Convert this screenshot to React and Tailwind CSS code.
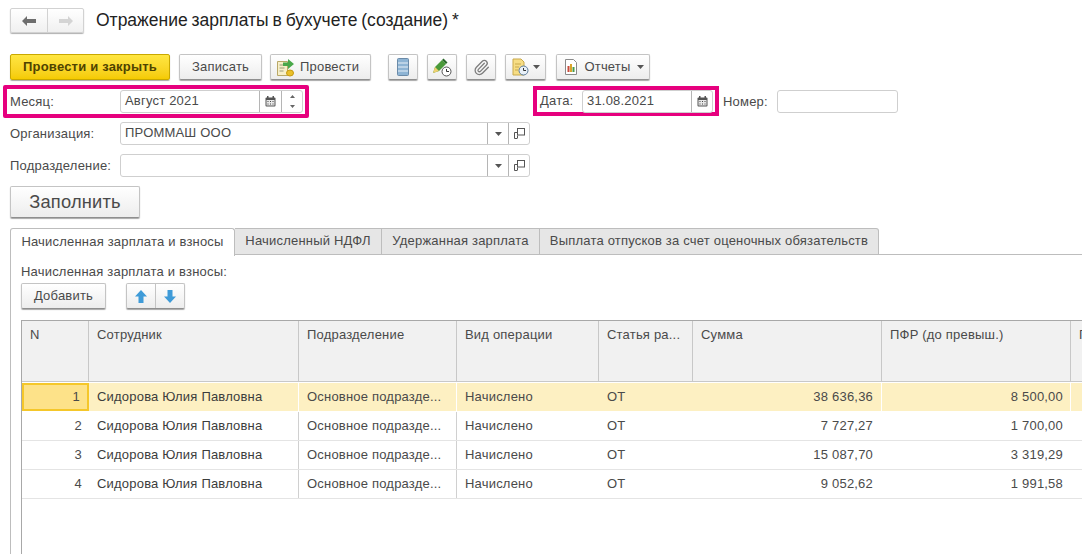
import React from "react";
import { Paperclip } from "lucide-react";

const Cal = () => (
  <svg width="11" height="11" viewBox="0 0 11 11" className="block">
    <rect x="0.5" y="1.5" width="10" height="9" rx="1" fill="#555" />
    <rect x="2" y="0" width="1.5" height="3" fill="#555" />
    <rect x="7.5" y="0" width="1.5" height="3" fill="#555" />
    <rect x="1.5" y="4" width="8" height="5.5" fill="#e8e8e8" />
    <path d="M2.5 5h1v1h-1zM5 5h1v1H5zM7.5 5h1v1h-1zM2.5 7.5h1v1h-1zM5 7.5h1v1H5zM7.5 7.5h1v1h-1z" fill="#444" />
  </svg>
);
const Tri = ({ color = "#555" }) => (
  <svg width="7" height="4" viewBox="0 0 7 4" className="block"><path d="M0 0h7L3.5 4z" fill={color} /></svg>
);
const OpenIcon = () => (
  <svg width="11" height="11" viewBox="0 0 11 11" className="block" fill="none" stroke="#555" strokeWidth="1">
    <rect x="3.5" y="0.5" width="7" height="6.5" />
    <path d="M3.500 4.500H0.500V10.500H3.500M3.500 7.500V10" />
  </svg>
);

const Btn = ({ w, h = "h-[26px]", className = "", children }) => (
  <div className={`${w} ${h} flex items-center justify-center shrink-0 rounded-[2px] border border-[#c4c4c4] border-b-[#8f8f8f] bg-gradient-to-b from-white to-[#ededed] shadow-[0_1px_1px_#a8a8a8] text-[#4a4a4a] ${className}`}>
    {children}
  </div>
);

const Field = ({ value, w, children }) => (
  <div className={`${w} h-[23px] shrink-0 flex items-stretch rounded-[3px] border border-[#cfcfcf] bg-white text-[#4a4a4a]`}>
    <div className="flex-1 pl-[4px] leading-[20px]">{value}</div>
    {children}
  </div>
);
const Cell = ({ w, children }) => (
  <div className={`${w} shrink-0 flex flex-col items-center justify-center border-l border-[#b5b5b5]`}>{children}</div>
);

const cols = "grid grid-cols-[67px_210px_158px_142px_94px_189px_189px_40px]";
const heads = ["N", "Сотрудник", "Подразделение", "Вид операции", "Статья ра...", "Сумма", "ПФР (до превыш.)", "П"];
const rows = [
  ["1", "38 636,36", "8 500,00"],
  ["2", "7 727,27", "1 700,00"],
  ["3", "15 087,70", "3 319,29"],
  ["4", "9 052,62", "1 991,58"],
];
const tabs = [
  ["w-[147px]", "Начисленный НДФЛ"],
  ["w-[158px]", "Удержанная зарплата"],
  ["w-[339px]", "Выплата отпусков за счет оценочных обязательств"],
];

export default function App() {
  return (
    <div className="w-[1082px] h-[554px] overflow-hidden bg-white text-[#4a4a4a] text-[13px] tracking-[0.2px] font-['Liberation_Sans',Arial,sans-serif] flex flex-col">
      {/* title bar */}
      <div className="flex items-center h-[25px] mt-[8px] ml-[10px]">
        <div className="flex w-[74px] h-[25px] rounded-[2px] border border-[#d2d2d2] bg-gradient-to-b from-white to-[#f0f0f0] shadow-[0_1px_1px_#b0b0b0]">
          <div className="w-[37px] flex items-center justify-center border-r border-[#d2d2d2]">
            <svg width="14" height="10" viewBox="0 0 14 10"><path d="M0 5l5-5v3h9v4H5v3z" fill="#6e6e6e" /></svg>
          </div>
          <div className="flex-1 flex items-center justify-center">
            <svg width="14" height="10" viewBox="0 0 14 10"><path d="M14 5L9 0v3H0v4h9v3z" fill="#d4d4d4" /></svg>
          </div>
        </div>
        <div className="ml-[12px] text-[17.5px] tracking-normal text-[#222] leading-[24px] -mt-[2px] w-[400px] whitespace-nowrap [word-spacing:-1px]">Отражение зарплаты в бухучете (создание) *</div>
      </div>

      {/* toolbar */}
      <div className="flex mt-[21px] ml-[10px] h-[26px]">
        <div className="w-[160px] h-[26px] flex items-center justify-center rounded-[2px] border border-[#c9a800] bg-gradient-to-b from-[#ffe640] to-[#f5cb00] shadow-[0_1px_1px_#a8a8a8] font-bold text-[#4f4300]">Провести и закрыть</div>
        <Btn w="w-[83px]" className="ml-[9px]">Записать</Btn>
        <Btn w="w-[101px]" className="ml-[8px] gap-[5px] !justify-start pl-[5px]">
          <svg width="19" height="19" viewBox="0 0 19 19">
            <path d="M1.500 3.500h10v14h-10z" fill="#f7efc8" stroke="#b9a868" />
            <path d="M3.500 7h6M3.500 10h5M3.500 13h4" stroke="#9a9a7a" />
            <path d="M7 4.500h5V1l6 5-6 5V8H7z" fill="#4aa84a" />
            <ellipse cx="14" cy="15" rx="3.500" ry="3" fill="#eac02a" stroke="#c69a10" />
          </svg>
          <span>Провести</span>
        </Btn>
        <Btn w="w-[30px]" className="ml-[17px]">
          <svg width="12" height="18" viewBox="0 0 12 18">
            <rect x="0.5" y="0.5" width="11" height="17" rx="1" fill="#8eb4d4" stroke="#6a8aa8" />
            <path d="M1 5h10M1 9h10M1 13h10" stroke="#e8f0f8" />
          </svg>
        </Btn>
        <Btn w="w-[30px]" className="ml-[9px]">
          <svg width="20" height="19" viewBox="0 0 20 19">
            <path d="M1 15l2-6 7-7 4 4-7 7z" fill="#4a9a3a" />
            <path d="M1 15l2-6 4 4z" fill="#f0d070" />
            <path d="M10 2l1.500-1.500 4 4L14 6z" fill="#2a6a2a" />
            <circle cx="14.500" cy="13.500" r="4.500" fill="#fff" stroke="#555" />
            <path d="M14.500 11v2.500H17" stroke="#333" fill="none" />
          </svg>
        </Btn>
        <Btn w="w-[30px]" className="ml-[9px]">
          <Paperclip size={17} color="#7d7d7d" strokeWidth={1.8} />
        </Btn>
        <Btn w="w-[41px]" className="ml-[9px] gap-[4px]">
          <svg width="18" height="18" viewBox="0 0 18 18">
            <path d="M2 1h8l3 3v13H2z" fill="#f6dd85" stroke="#c9a94a" />
            <path d="M4 6h6M4 9h4M4 12h3" stroke="#c9a94a" />
            <circle cx="12.500" cy="12.500" r="4.500" fill="#e8f0f8" stroke="#5a7a9a" />
            <path d="M12.500 10v2.500H15" stroke="#333" fill="none" />
          </svg>
          <Tri />
        </Btn>
        <Btn w="w-[94px]" className="ml-[10px] gap-[6px] pl-[2px]">
          <svg width="14" height="16" viewBox="0 0 14 16">
            <path d="M1.500 0.500h8l3 3v12h-11z" fill="#fff" stroke="#8a8a8a" />
            <rect x="3.500" y="7" width="2" height="6" fill="#c84a3a" />
            <rect x="6" y="5" width="2" height="8" fill="#d9a52a" />
            <rect x="8.500" y="8" width="2" height="5" fill="#4a9a4a" />
          </svg>
          <span>Отчеты</span>
          <Tri />
        </Btn>
      </div>

      {/* month / date row */}
      <div className="flex items-start mt-[5px] ml-[3px] h-[33px]">
        <div className="w-[306px] h-[33px] flex items-center rounded-[2px] border-[4px] border-[#e6007e] pl-[3px]">
          <div className="w-[110px]">Месяц:</div>
          <Field value="Август 2021" w="w-[183px]">
            <Cell w="w-[22px]"><Cal /></Cell>
            <Cell w="w-[21px]">
              <svg width="5" height="17" viewBox="0 0 5 17"><path d="M2.500 2L5 5H0zM0 12h5l-2.500 3z" fill="#666" /></svg>
            </Cell>
          </Field>
        </div>
        <div className="ml-[224px] mt-[1px] w-[186px] h-[30px] flex items-center border-[4px] border-[#e6007e] pl-[3px]">
          <div className="w-[42px]">Дата:</div>
          <Field value="31.08.2021" w="w-[131px]">
            <Cell w="w-[21px]"><Cal /></Cell>
          </Field>
        </div>
        <div className="ml-[4px] mt-[5px] h-[23px] leading-[23px]">Номер:</div>
        <div className="ml-[9px] mt-[5px] w-[121px] h-[23px] rounded-[3px] border border-[#cfcfcf]" />
      </div>

      {/* organisation */}
      <div className="flex items-center mt-[4px] ml-[10px]">
        <div className="w-[110px]">Организация:</div>
        <Field value="ПРОММАШ ООО" w="w-[410px]">
          <Cell w="w-[21px]"><Tri /></Cell>
          <Cell w="w-[21px]"><OpenIcon /></Cell>
        </Field>
      </div>
      <div className="flex items-center mt-[9px] ml-[10px]">
        <div className="w-[110px]">Подразделение:</div>
        <Field value="" w="w-[410px]">
          <Cell w="w-[21px]"><Tri /></Cell>
          <Cell w="w-[21px]"><OpenIcon /></Cell>
        </Field>
      </div>

      <Btn w="w-[130px]" h="h-[32px]" className="ml-[10px] mt-[9px] text-[18.3px]">Заполнить</Btn>

      {/* tabs */}
      <div className="flex mt-[10px] ml-[10px] h-[27px]">
        <div className="w-[225px] h-[28px] z-10 pb-[1px] flex items-center justify-center rounded-t-[3px] border border-[#bdbdbd] border-b-0 bg-white whitespace-nowrap">Начисленная зарплата и взносы</div>
        {tabs.map(([w, t], i) => (
          <div key={t} className={`${w} pb-[1px] flex items-center justify-center whitespace-nowrap bg-[#e6e6e6] border border-l-0 border-[#bdbdbd] ${i === 2 ? "rounded-tr-[3px]" : ""}`}>{t}</div>
        ))}
        <div className="flex-1 border-b border-[#bdbdbd]" />
      </div>

      {/* tab panel */}
      <div className="flex-1 min-h-0 ml-[10px] pl-[10px] border-l border-[#bdbdbd] flex flex-col">
        <div className="mt-[9px] leading-[16px]">Начисленная зарплата и взносы:</div>
        <div className="flex mt-[3px]">
          <Btn w="w-[85px]">Добавить</Btn>
          <div className="ml-[20px] flex w-[59px] h-[26px] rounded-[2px] border border-[#c4c4c4] border-b-[#8f8f8f] bg-gradient-to-b from-white to-[#ededed] shadow-[0_1px_1px_#a8a8a8]">
            <div className="flex-1 flex items-center justify-center border-r border-[#c4c4c4]">
              <svg width="12" height="13" viewBox="0 0 12 13"><path d="M6 0l6 6.500H8.500V13h-5V6.500H0z" fill="#3f9bd8" /></svg>
            </div>
            <div className="flex-1 flex items-center justify-center">
              <svg width="12" height="13" viewBox="0 0 12 13"><path d="M6 13l6-6.500H8.500V0h-5v6.500H0z" fill="#3f9bd8" /></svg>
            </div>
          </div>
        </div>

        {/* table */}
        <div className="mt-[11px] flex-1 border-l border-t border-[#a8a8a8] w-[1100px]">
          <div className={`${cols} h-[61px] mb-[1px] bg-[#f1f1f1] border-b border-[#c8c8c8]`}>
            {heads.map((h) => (
              <div key={h} className="pl-[8px] pt-[6px] border-r border-[#c8c8c8] leading-[16px] whitespace-nowrap overflow-hidden">{h}</div>
            ))}
          </div>
          {rows.map(([n, sum, pfr], i) => {
            const sel = i === 0;
            return (
              <div key={n} className={`${cols} h-[29px] border-b ${sel ? "bg-[#fdf0c2] border-white" : "border-[#e4e4e4]"}`}>
                <div className={`flex items-center justify-end pr-[7px] ${sel ? "bg-[#fde289] border-2 border-[#f5c72a]" : ""}`}>{n}</div>
                <div className={`flex items-center pl-[8px] border-r ${sel ? "border-white" : "border-[#d0d0d0]"} text-[#3c3c3c]`}>Сидорова Юлия Павловна</div>
                <div className={`flex items-center pl-[8px] border-r ${sel ? "border-white" : "border-[#d0d0d0]"}`}>Основное подразде...</div>
                <div className="flex items-center pl-[8px]">Начислено</div>
                <div className="flex items-center pl-[8px]">ОТ</div>
                <div className={`flex items-center justify-end pr-[8px] border-r ${sel ? "border-white" : "border-transparent"}`}>{sum}</div>
                <div className={`flex items-center justify-end pr-[7px] border-r ${sel ? "border-white" : "border-transparent"}`}>{pfr}</div>
                <div />
              </div>
            );
          })}
        </div>
      </div>
    </div>
  );
}
